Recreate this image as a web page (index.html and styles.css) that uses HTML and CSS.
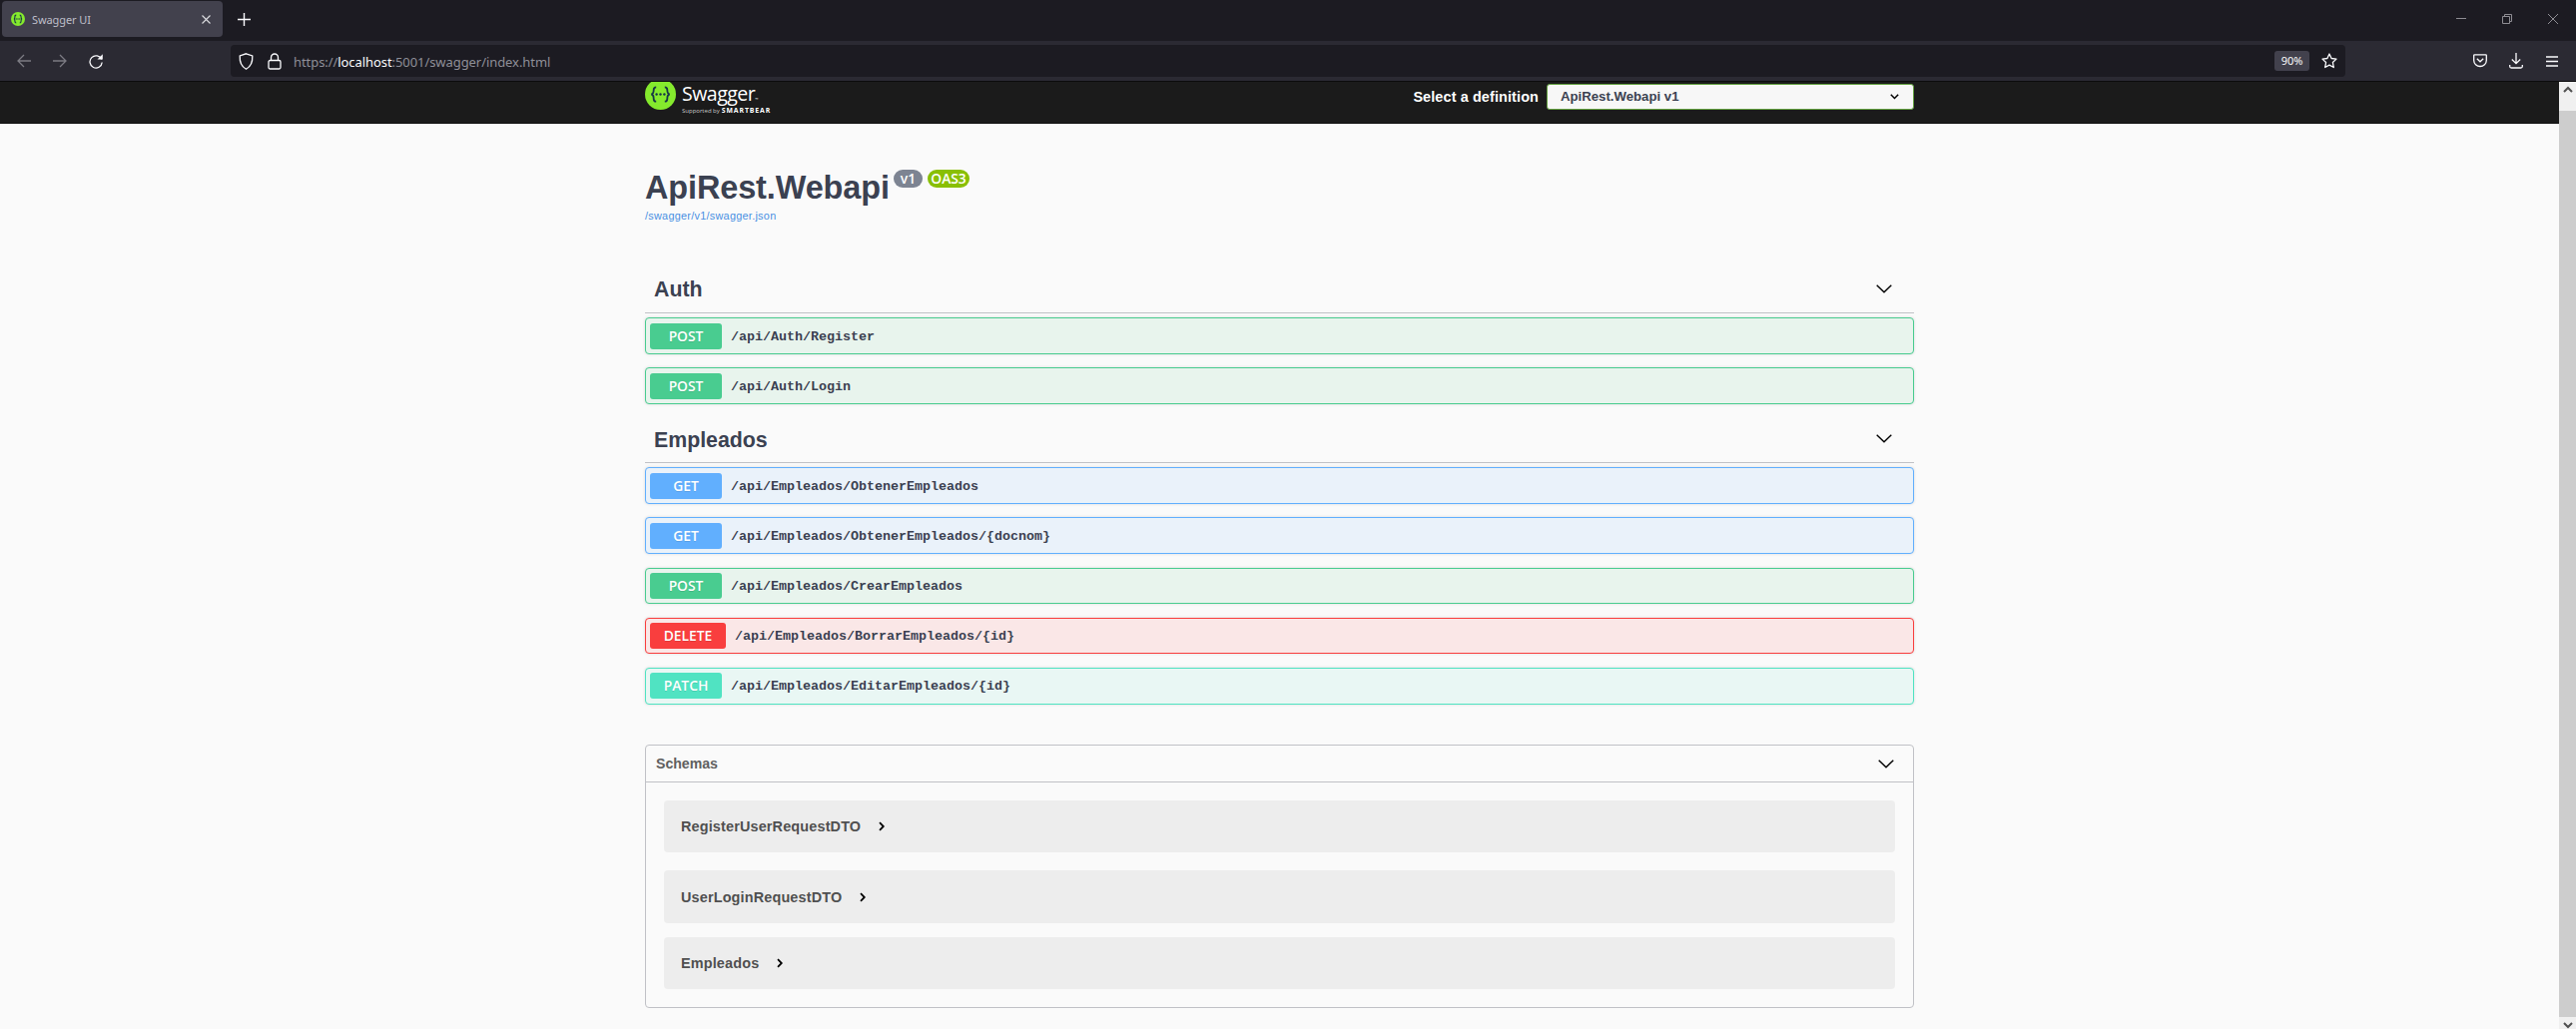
FILE: index.html
```html
<!DOCTYPE html>
<html lang="es">
<head>
<meta charset="utf-8">
<title>Swagger UI</title>
<link rel="stylesheet" href="styles.css">
</head>
<body>
<div class="titlebar">
  <div class="tab">
    <svg class="favicon" width="14" height="14" viewBox="0 0 32 32"><circle cx="16" cy="16" r="16" fill="#85ea2d"/><g fill="none" stroke="#173647" stroke-width="2.6"><path d="M12 7c-3 0-3 2-3 4s0 5-2.500 5c2.500 0 2.500 3 2.500 5s0 4 3 4M20 7c3 0 3 2 3 4s0 5 2.500 5c-2.500 0-2.500 3-2.500 5s0 4-3 4"/><path d="M10.500 16h11" stroke-dasharray="3 1"/></g></svg>
    <span class="tab-title">Swagger UI</span>
    <svg class="tab-close" width="9" height="9" viewBox="0 0 9 9"><path d="M.5.5l8 8M8.500.5l-8 8" stroke="#dcdce0" stroke-width="1.1"/></svg>
  </div>
  <svg class="new-tab" width="13" height="13" viewBox="0 0 13 13"><path d="M6.500 0v13M0 6.500h13" stroke="#fbfbfe" stroke-width="1.4"/></svg>
  <div class="window-buttons">
    <svg width="10" height="10" viewBox="0 0 10 10"><path d="M0 4.500h10"/></svg>
    <svg width="10" height="10" viewBox="0 0 10 10"><path d="M.5 2.500h7v7h-7zM2.500 2.500v-2h7v7h-2"/></svg>
    <svg width="10" height="10" viewBox="0 0 10 10"><path d="M0 0l10 10M10 0L0 10"/></svg>
  </div>
</div>

<div class="toolbar">
  <div class="nav">
    <svg class="dim" width="14" height="14" viewBox="0 0 14 14"><path d="M14 7H1M7 1L1 7l6 6"/></svg>
    <svg class="dim" width="14" height="14" viewBox="0 0 14 14"><path d="M0 7h13M7 1l6 6-6 6"/></svg>
    <svg width="14" height="16" viewBox="0 0 14 16"><path d="M12.700 6.500A6.100 6.100 0 1 0 13.200 9.500" stroke-width="1.600"/><path d="M13.800 1.200v5.300H8.500z" fill="#fbfbfe" stroke="none"/></svg>
  </div>
  <div class="urlbar">
    <svg width="15" height="17" viewBox="0 0 15 17"><path d="M7.500.8L13.800 3c.3 6-1.300 10.500-6.300 13.200C2.500 13.500.9 9 1.200 3z"/></svg>
    <svg class="lock" width="14" height="17" viewBox="0 0 14 17"><rect x="1" y="7.500" width="12" height="8.500" rx="1.500"/><path d="M3.500 7.500V4.500a3.500 3.500 0 0 1 7 0v3"/></svg>
    <span class="url">https://<b>localhost</b>:5001/swagger/index.html</span>
    <span class="zoom">90%</span>
    <svg width="16" height="16" viewBox="0 0 16 16"><path d="M8 1l2.100 4.500 4.900.6-3.600 3.400.9 5L8 12.100l-4.300 2.400.9-5L1 6.100l4.900-.6z" stroke-linejoin="round"/></svg>
  </div>
  <div class="tools">
    <svg width="14" height="14" viewBox="0 0 14 14"><path d="M1.500.8h11q.8 0 .8.800V6.500a6.300 6 0 0 1-12.600 0V1.600q0-.8.8-.8zM3.800 4.800L7 7.800l3.200-3"/></svg>
    <svg width="14" height="16" viewBox="0 0 14 16"><path d="M7 0v10.500M2.800 6.500L7 10.700l4.200-4.200M.7 12v1.500q0 1.500 1.500 1.500h9.600q1.500 0 1.500-1.500V12"/></svg>
    <svg width="12" height="11" viewBox="0 0 12 11"><path d="M0 1h12M0 5.500h12M0 10h12"/></svg>
  </div>
</div>

<div class="viewport">
  <main class="page">
    <header class="topbar">
      <div class="wrapper topbar-row">
        <div class="logo">
          <svg width="31" height="28" viewBox="0 3 31 28"><circle cx="15.500" cy="15.500" r="15.500" fill="#85ea2d"/><g fill="none" stroke="#173647" stroke-width="1.800"><path d="M11.200 8.300c-2.300 0-2.500 1-2.500 2.800 0 2.100 0 4.200-2.500 4.400 2.500.2 2.500 2.300 2.500 4.400 0 1.800.2 2.800 2.500 2.800M19.800 8.300c2.300 0 2.500 1 2.500 2.800 0 2.100 0 4.200 2.500 4.400-2.500.2-2.500 2.300-2.500 4.400 0 1.800-.2 2.800-2.500 2.800"/></g><g fill="#173647"><circle cx="11.600" cy="15.500" r="1.200"/><circle cx="15.500" cy="15.500" r="1.200"/><circle cx="19.400" cy="15.500" r="1.200"/></g></svg>
          <div class="logo-text">
            <div class="logo-name">Swagger<span class="tm">™</span></div>
            <div class="logo-sub"><span>Supported by</span><b>SMARTBEAR</b></div>
          </div>
        </div>
        <div class="definition">
          <span class="definition-label">Select a definition</span>
          <div class="select"><span>ApiRest.Webapi v1</span><svg width="9" height="6" viewBox="0 0 9 6"><path d="M.8.8l3.700 3.700L8.200.8" fill="none" stroke="#000" stroke-width="1.500"/></svg></div>
        </div>
      </div>
    </header>

    <div class="wrapper">
      <section class="info">
        <div class="info-row"><h1>ApiRest.Webapi</h1><span class="pill version">v1</span><span class="pill oas">OAS3</span></div>
        <a class="spec-link">/swagger/v1/swagger.json</a>
      </section>

      <section class="tag">
        <h2><span>Auth</span><svg width="16" height="9" viewBox="0 0 16 9"><path d="M.7.7L8 7.700 15.300.7"/></svg></h2>
        <div class="op post"><span class="method">POST</span><span class="path">/api/Auth/Register</span></div>
        <div class="op post"><span class="method">POST</span><span class="path">/api/Auth/Login</span></div>
      </section>
      <section class="tag">
        <h2><span>Empleados</span><svg width="16" height="9" viewBox="0 0 16 9"><path d="M.7.7L8 7.700 15.300.7"/></svg></h2>
        <div class="op get"><span class="method">GET</span><span class="path">/api/Empleados/ObtenerEmpleados</span></div>
        <div class="op get"><span class="method">GET</span><span class="path">/api/Empleados/ObtenerEmpleados/{docnom}</span></div>
        <div class="op post tight"><span class="method">POST</span><span class="path">/api/Empleados/CrearEmpleados</span></div>
        <div class="op delete tight"><span class="method">DELETE</span><span class="path">/api/Empleados/BorrarEmpleados/{id}</span></div>
        <div class="op patch low"><span class="method">PATCH</span><span class="path">/api/Empleados/EditarEmpleados/{id}</span></div>
      </section>

      <section class="schemas">
        <h3>Schemas<svg width="16" height="9" viewBox="0 0 16 9"><path d="M.7.7L8 7.700 15.300.7"/></svg></h3>
        <div class="model"><span>RegisterUserRequestDTO</span><svg width="6" height="10" viewBox="0 0 6 10"><path d="M1 1.200L4.800 5 1 8.800"/></svg></div>
        <div class="model second"><span>UserLoginRequestDTO</span><svg width="6" height="10" viewBox="0 0 6 10"><path d="M1 1.200L4.800 5 1 8.800"/></svg></div>
        <div class="model"><span>Empleados</span><svg width="6" height="10" viewBox="0 0 6 10"><path d="M1 1.200L4.800 5 1 8.800"/></svg></div>
      </section>
    </div>
  </main>
  <div class="scrollbar">
    <svg width="10" height="7" viewBox="0 0 10 7"><path d="M1 6l4-4 4 4"/></svg>
    <div class="thumb"></div>
    <svg width="10" height="7" viewBox="0 0 10 7"><path d="M1 1l4 4 4-4"/></svg>
  </div>
</div>
</body>
</html>
```
FILE: styles.css
```css
* { box-sizing: border-box; }
body {
  margin: 0;
  height: 1031px;
  overflow: hidden;
  background: #fafafa;
  font-family: "Liberation Sans", Arial, sans-serif;
  color: #3b4151;
}
svg { display: block; flex: none; }
h1, h2, h3 { margin: 0; }

/* Browser chrome */
.titlebar {
  display: flex;
  height: 41px;
  padding: 1px 18px 4px 2px;
  background: #1c1b22;
  font-family: "Noto Sans", sans-serif;
}
.tab {
  display: flex;
  align-items: center;
  width: 221px;
  height: 36px;
  padding: 0 12px 0 9px;
  border-radius: 4px;
  background: #42414d;
}
.tab-title { margin-left: 7px; font-size: 11px; letter-spacing: -.1px; color: #bfbfc9; }
.tab-close { margin-left: auto; }
.new-tab { margin: 12px 0 0 15px; }
.window-buttons { display: flex; gap: 36px; margin: 13px 0 0 auto; }
.window-buttons path { fill: none; stroke: #8e8d93; }
.toolbar {
  display: flex;
  align-items: center;
  height: 41px;
  padding: 0 18px 0 17px;
  border-bottom: 1px solid #0c0c0d;
  background: #2b2a33;
  font-family: "Noto Sans", sans-serif;
}
.toolbar path, .toolbar rect { fill: none; stroke: #fbfbfe; stroke-width: 1.3; }
.toolbar path[fill] { fill: #fbfbfe; stroke: none; }
.toolbar .dim path { stroke: #7c7b83; }
.nav { display: flex; align-items: center; gap: 22px; width: 214px; }
.urlbar {
  display: flex;
  align-items: center;
  width: 2118px;
  height: 32px;
  padding: 0 8px;
  border-radius: 4px;
  background: #1c1b22;
}
.lock { margin-left: 14px; }
.url { margin: 2px 0 0 12px; font-size: 13px; letter-spacing: -.07px; color: #8f8f98; white-space: nowrap; }
.url b { font-weight: 400; color: #fbfbfe; }
.zoom {
  width: 35px;
  height: 20px;
  margin: 0 12px 0 auto;
  border-radius: 3px;
  background: #42414d;
  color: #fbfbfe;
  font-size: 11px;
  line-height: 20px;
  text-align: center;
}
.tools { display: flex; align-items: center; gap: 22px; margin-left: auto; }
.tools svg:last-child { margin-left: 1px; }

/* Page viewport */
.viewport { display: flex; height: 949px; }
.page { flex: 1; }
.scrollbar {
  display: flex;
  flex-direction: column;
  align-items: center;
  width: 17px;
  padding: 4px 0 0;
  background: #f0f0f0;
}
.scrollbar path { fill: none; stroke: #505050; stroke-width: 2; }
.thumb { width: 17px; height: 909px; margin: 18px 0 5px; background: #cdcdcd; }
.wrapper { width: 1271px; margin-left: 646px; }

.topbar { height: 42px; background: #1b1b1b; border-bottom: 1px solid #111; }
.topbar-row { display: flex; justify-content: space-between; align-items: flex-start; }
.logo { display: flex; color: #fff; font-family: "Open Sans", sans-serif; }
.logo-text { margin-left: 6px; }
.logo-name { font-size: 19.500px; line-height: 24px; letter-spacing: -.5px; }
.tm { font-size: 4px; line-height: 0; }
.logo-sub { display: flex; gap: 2px; font-size: 6px; line-height: 10px; color: #c8c8c8; }
.logo-sub b { font-size: 6.800px; letter-spacing: .95px; color: #fff; }
.definition { display: flex; align-items: center; padding-top: 2px; font-weight: 700; }
.definition-label { margin-right: 8px; color: #fff; font-size: 14.400px; letter-spacing: .13px; }
.select {
  display: flex;
  align-items: center;
  justify-content: space-between;
  width: 368px;
  height: 26px;
  padding: 0 14px 1px 13px;
  border: 1px solid #62a03f;
  border-radius: 3px;
  background: #f7f7f7;
  font-size: 13.200px;
}

.info { height: 146px; padding-top: 46px; }
.info-row { display: flex; align-items: flex-start; height: 40px; }
.info h1 { width: 249px; font-size: 32.400px; line-height: 37px; letter-spacing: -.08px; }
.pill {
  height: 18px;
  border-radius: 9px;
  color: #fff;
  font: 600 13.800px/17px "Open Sans", sans-serif;
  text-align: center;
}
.version { width: 29px; background: #7d8492; }
.oas { width: 42px; margin-left: 5px; background: #89bf04; }
.spec-link { display: block; font-size: 10.800px; line-height: 12px; letter-spacing: .3px; color: #4990e2; }

/* Tags and operations */
.tag h2 {
  display: flex;
  align-items: center;
  justify-content: space-between;
  height: 44px;
  margin-bottom: 4px;
  padding: 0 22px 5px 9px;
  border-bottom: 1px solid #c0c1c6;
  font-size: 21.300px;
}
.tag h2 span { padding-top: 3px; }
.tag + .tag { margin-top: 15px; }
.tag + .tag h2 span { padding-top: 4px; }
.tag h2 path, .schemas h3 path { fill: none; stroke: #000; stroke-width: 1.4; }
.op {
  display: flex;
  height: 37px;
  padding: 5px 0 0 4px;
  border: 1px solid var(--accent);
  border-radius: 4px;
  background: var(--tint);
  box-shadow: 0 0 3px rgba(0, 0, 0, .14);
}
.op + .op { margin-top: 13px; }
.op + .tight { height: 36px; margin-top: 14px; padding-top: 4px; }
.op + .low { margin-top: 14px; padding-top: 4px; }
.post { --accent: #49cc90; --tint: #e8f4ed; }
.get { --accent: #61affe; --tint: #eaf2fa; }
.delete { --accent: #f93e3e; --tint: #fae7e7; }
.patch { --accent: #50e3c2; --tint: #e9f7f4; }
.method {
  width: 72px;
  height: 26px;
  border-radius: 3px;
  background: var(--accent);
  color: #fff;
  font: 600 13.800px/25px "Open Sans", sans-serif;
  text-align: center;
  text-shadow: 0 1px 0 rgba(0, 0, 0, .1);
}
.delete .method { width: 76px; }
.path { margin-left: 9px; font: 700 13.330px/27px "Liberation Mono", monospace; }

/* Schemas */
.schemas { height: 264px; margin-top: 40px; border: 1px solid #c0c1c6; border-radius: 4px; color: #505050; }
.schemas h3 {
  display: flex;
  align-items: center;
  justify-content: space-between;
  height: 37px;
  padding: 0 19px 0 10px;
  border-bottom: 1px solid #c0c1c6;
  font-size: 14.100px;
  color: #606060;
}
.model {
  display: flex;
  align-items: center;
  gap: 18px;
  height: 52px;
  margin: 18px 18px 0;
  padding-left: 17px;
  border-radius: 4px;
  background: #ededed;
  font-size: 14.400px;
  font-weight: 700;
  letter-spacing: .17px;
}
.model path { fill: none; stroke: #000; stroke-width: 1.8; }
.second { height: 53px; }
.second + .model { margin-top: 14px; }
```
